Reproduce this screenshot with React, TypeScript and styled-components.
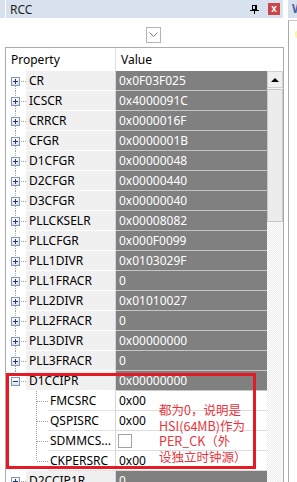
import React from 'react';
import styled, { createGlobalStyle } from 'styled-components';

const GlobalStyle = createGlobalStyle`
    html, body {
        margin: 0;
        padding: 0;
        background: #ffffff;
    }
    body {
        font-family: 'Noto Sans', 'Open Sans', sans-serif;
    }
`;

const TITLE_BG = '#d8e2ee';

const Screen = styled.div`
    width: 297px;
    height: 482px;
    overflow: hidden;
    display: flex;
    background: #ffffff;
    font-family: 'Noto Sans', 'Open Sans', sans-serif;
    font-size: 11px;
    color: #000000;
`;

const LeftStrip = styled.div`
    width: 5px;
    flex: none;
    display: flex;
    flex-direction: column;

    &::before {
        content: '';
        height: 18px;
        background: ${TITLE_BG};
    }
`;

const Panel = styled.div`
    width: 279px;
    flex: none;
    display: flex;
    flex-direction: column;
`;

const TitleBar = styled.div`
    height: 18px;
    margin-left: 1px;
    width: 277px;
    background: ${TITLE_BG};
    display: flex;
    align-items: center;
    padding: 0 3px 0 4px;
    box-sizing: border-box;
    font-size: 12px;
`;

const TitleText = styled.span`
    flex: 1;
    color: #1e1e1e;
`;

const CloseButton = styled.div`
    width: 12px;
    height: 12px;
    margin-left: 9px;
    background: #c9474a;
    color: #ffffff;
    font-size: 10px;
    font-weight: bold;
    line-height: 11px;
    text-align: center;
    font-family: 'Liberation Sans', sans-serif;
`;

const Toolbar = styled.div`
    height: 29px;
    padding: 9px 0 0 141px;
    box-sizing: border-box;
    display: flex;
    align-items: flex-start;
`;

const DropButton = styled.div`
    width: 15px;
    height: 16px;
    box-sizing: border-box;
    border: 1px solid #b5b5b5;
    background: #ffffff;
    display: flex;
    align-items: center;
    justify-content: center;
`;

const Grid = styled.div`
    flex: 1;
    border: 1px solid #ababab;
    border-bottom: none;
    display: flex;
    flex-direction: column;
    overflow: hidden;
`;

const Header = styled.div`
    height: 23px;
    display: flex;
    font-size: 12px;
    flex: none;
`;

const HeadCell = styled.div<{ $width?: number }>`
    ${(p) => (p.$width ? `width: ${p.$width}px; flex: none;` : 'flex: 1;')}
    box-sizing: border-box;
    padding-left: 5px;
    line-height: 23px;
    border-right: ${(p) => (p.$width ? '1px solid #e0e0e0' : 'none')};
`;

const Body = styled.div`
    flex: 1;
    display: flex;
`;

const RowsColumn = styled.div`
    width: 261px;
    flex: none;
    position: relative;
`;

const Row = styled.div`
    height: 20px;
    display: flex;
`;

const Gutter = styled.div<{ $width: number }>`
    width: ${(p) => p.$width}px;
    flex: none;
    height: 20px;
`;

const PropCell = styled.div<{ $child?: boolean }>`
    width: ${(p) => (p.$child ? 68 : 90)}px;
    flex: none;
    box-sizing: border-box;
    padding-left: ${(p) => (p.$child ? 2 : 3)}px;
    background: ${(p) => (p.$child ? '#ffffff' : '#f0f0f0')};
    border-bottom: 1px solid ${(p) => (p.$child ? '#e4e4e4' : '#ffffff')};
    border-right: 1px solid #d6d6d6;
    line-height: 19px;
    font-size: 12px;
    white-space: nowrap;
    overflow: hidden;
`;

const ValueCell = styled.div<{ $child?: boolean }>`
    flex: 1;
    box-sizing: border-box;
    padding-left: 3px;
    background: ${(p) => (p.$child ? '#ffffff' : '#808080')};
    color: ${(p) => (p.$child ? '#000000' : '#ffffff')};
    border-bottom: 1px solid ${(p) => (p.$child ? '#dcdcdc' : '#c6c6c6')};
    line-height: 19px;
    font-size: 12px;
    display: flex;
    align-items: center;
`;

const CheckBox = styled.div`
    width: 14px;
    height: 14px;
    margin-left: -1px;
    box-sizing: border-box;
    border: 1px solid #a3a3a3;
    background: #ffffff;
`;

const Scrollbar = styled.div`
    width: 16px;
    flex: none;
    display: flex;
    flex-direction: column;
    background-color: #fbfbfb;
    background-image: repeating-conic-gradient(#ececec 0 25%, #ffffff 0 50%);
    background-size: 2px 2px;
`;

const ScrollUp = styled.div`
    height: 17px;
    box-sizing: border-box;
    border: 1px solid #cfcfcf;
    background: #f0f0f0;
    display: flex;
    align-items: center;
    justify-content: center;

    &::after {
        content: '';
        border-left: 4px solid transparent;
        border-right: 4px solid transparent;
        border-bottom: 4px solid #000000;
    }
`;

const ScrollThumb = styled.div`
    height: 133px;
    margin-top: 1px;
    box-sizing: border-box;
    border: 1px solid #c8c8c8;
    background: #ececec;
`;

const HighlightBox = styled.div`
    position: absolute;
    left: 0;
    top: 302px;
    width: 250px;
    height: 96px;
    box-sizing: border-box;
    border: 3px solid #e41b24;
    pointer-events: none;
`;

const Note = styled.div`
    position: absolute;
    left: 153px;
    top: 331px;
    font-family: 'Noto Sans CJK SC', 'Noto Sans', sans-serif;
    font-size: 12.5px;
    line-height: 15.5px;
    color: #e8343b;
    white-space: nowrap;
`;

const Gap = styled.div`
    width: 4px;
    flex: none;
`;

const SidePanel = styled.div`
    flex: 1;
    display: flex;
    flex-direction: column;
`;

const SideTitle = styled.div`
    height: 18px;
    background: ${TITLE_BG};
    padding-left: 4px;
    font-size: 12px;
    line-height: 18px;
    color: #4a5fa0;
    font-weight: bold;
    overflow: hidden;
`;

const SideBody = styled.div`
    flex: 1;
    margin-top: 2px;
    border-left: 1px solid #a8a8a8;
    border-top: 1px solid #c8c8c8;
    padding: 10px 0 0 6px;
`;

const SideMark = styled.div`
    width: 4px;
    height: 7px;
    background: #fff7a8;
`;

type Reg = { name: string; value: string };

const registers: Reg[] = [
    { name: 'CR', value: '0x0F03F025' },
    { name: 'ICSCR', value: '0x4000091C' },
    { name: 'CRRCR', value: '0x0000016F' },
    { name: 'CFGR', value: '0x0000001B' },
    { name: 'D1CFGR', value: '0x00000048' },
    { name: 'D2CFGR', value: '0x00000440' },
    { name: 'D3CFGR', value: '0x00000040' },
    { name: 'PLLCKSELR', value: '0x00008082' },
    { name: 'PLLCFGR', value: '0x000F0099' },
    { name: 'PLL1DIVR', value: '0x0103029F' },
    { name: 'PLL1FRACR', value: '0' },
    { name: 'PLL2DIVR', value: '0x01010027' },
    { name: 'PLL2FRACR', value: '0' },
    { name: 'PLL3DIVR', value: '0x00000000' },
    { name: 'PLL3FRACR', value: '0' },
];

const fields: (Reg & { check?: boolean })[] = [
    { name: 'FMCSRC', value: '0x00' },
    { name: 'QSPISRC', value: '0x00' },
    { name: 'SDMMCS...', value: '', check: true },
    { name: 'CKPERSRC', value: '0x00' },
];

function TreeNode({ first, last, open }: { first?: boolean; last?: boolean; open?: boolean }) {
    return (
        <svg width="20" height="20" style={{ display: 'block' }}>
            {!first && <line x1="9.5" y1="0" x2="9.5" y2="6" stroke="#a0a0a0" strokeDasharray="1 1" />}
            {!last && <line x1="9.5" y1="15" x2="9.5" y2="20" stroke="#a0a0a0" strokeDasharray="1 1" />}
            <line x1="15" y1="10.5" x2="20" y2="10.5" stroke="#a0a0a0" strokeDasharray="1 1" />
            <defs>
                <linearGradient id="nodeFill" x1="0" y1="0" x2="0" y2="1">
                    <stop offset="0" stopColor="#ffffff" />
                    <stop offset="1" stopColor="#d9e1ea" />
                </linearGradient>
            </defs>
            <rect x="5.5" y="6.5" width="8" height="8" fill="url(#nodeFill)" stroke="#8297b5" />
            <line x1="7" y1="10.5" x2="12" y2="10.5" stroke="#23395d" />
            {!open && <line x1="9.5" y1="8" x2="9.5" y2="13" stroke="#23395d" />}
        </svg>
    );
}

function TreeLeaf({ last }: { last?: boolean }) {
    return (
        <svg width="42" height="20" style={{ display: 'block' }}>
            <line x1="30.5" y1="0" x2="30.5" y2={last ? 10 : 20} stroke="#a0a0a0" strokeDasharray="1 1" />
            <line x1="31" y1="10.5" x2="42" y2="10.5" stroke="#a0a0a0" strokeDasharray="1 1" />
        </svg>
    );
}

export default function App() {
    return (
        <>
            <GlobalStyle />
            <Screen>
                <LeftStrip />
                <Panel>
                    <TitleBar>
                        <TitleText>RCC</TitleText>
                        <svg width="9" height="9" style={{ display: 'block', marginTop: 1 }}>
                            <rect x="2.5" y="0.5" width="4" height="4" fill="none" stroke="#000" />
                            <rect x="5" y="0" width="2" height="5" fill="#000" />
                            <line x1="0" y1="5.5" x2="9" y2="5.5" stroke="#000" />
                            <line x1="4.5" y1="6" x2="4.5" y2="9" stroke="#000" />
                        </svg>
                        <CloseButton>x</CloseButton>
                    </TitleBar>
                    <Toolbar>
                        <DropButton>
                            <svg width="9" height="6" style={{ display: 'block' }}>
                                <polyline points="0.5,0.5 4.5,4.5 8.5,0.5" fill="none" stroke="#7a7a7a" />
                            </svg>
                        </DropButton>
                    </Toolbar>
                    <Grid>
                        <Header>
                            <HeadCell $width={110}>Property</HeadCell>
                            <HeadCell>Value</HeadCell>
                        </Header>
                        <Body>
                            <RowsColumn>
                                {registers.map((reg, i) => (
                                    <Row key={reg.name}>
                                        <Gutter $width={20}>
                                            <TreeNode first={i === 0} />
                                        </Gutter>
                                        <PropCell>{reg.name}</PropCell>
                                        <ValueCell>{reg.value}</ValueCell>
                                    </Row>
                                ))}
                                <Row>
                                    <Gutter $width={20}>
                                        <TreeNode open last />
                                    </Gutter>
                                    <PropCell>D1CCIPR</PropCell>
                                    <ValueCell>0x00000000</ValueCell>
                                </Row>
                                {fields.map((f, i) => (
                                    <Row key={f.name}>
                                        <Gutter $width={42}>
                                            <TreeLeaf last={i === fields.length - 1} />
                                        </Gutter>
                                        <PropCell $child>{f.name}</PropCell>
                                        <ValueCell $child>{f.check ? <CheckBox /> : f.value}</ValueCell>
                                    </Row>
                                ))}
                                <Row>
                                    <Gutter $width={20}>
                                        <TreeNode first />
                                    </Gutter>
                                    <PropCell>D2CCIP1R</PropCell>
                                    <ValueCell>0</ValueCell>
                                </Row>
                                <HighlightBox />
                                <Note>
                                    都为0，说明是
                                    <br />
                                    HSI(64MB)作为
                                    <br />
                                    PER_CK（外
                                    <br />
                                    设独立时钟源）
                                </Note>
                            </RowsColumn>
                            <Scrollbar>
                                <ScrollUp />
                                <ScrollThumb />
                            </Scrollbar>
                        </Body>
                    </Grid>
                </Panel>
                <Gap />
                <SidePanel>
                    <SideTitle>W</SideTitle>
                    <SideBody>
                        <SideMark />
                    </SideBody>
                </SidePanel>
            </Screen>
        </>
    );
}
